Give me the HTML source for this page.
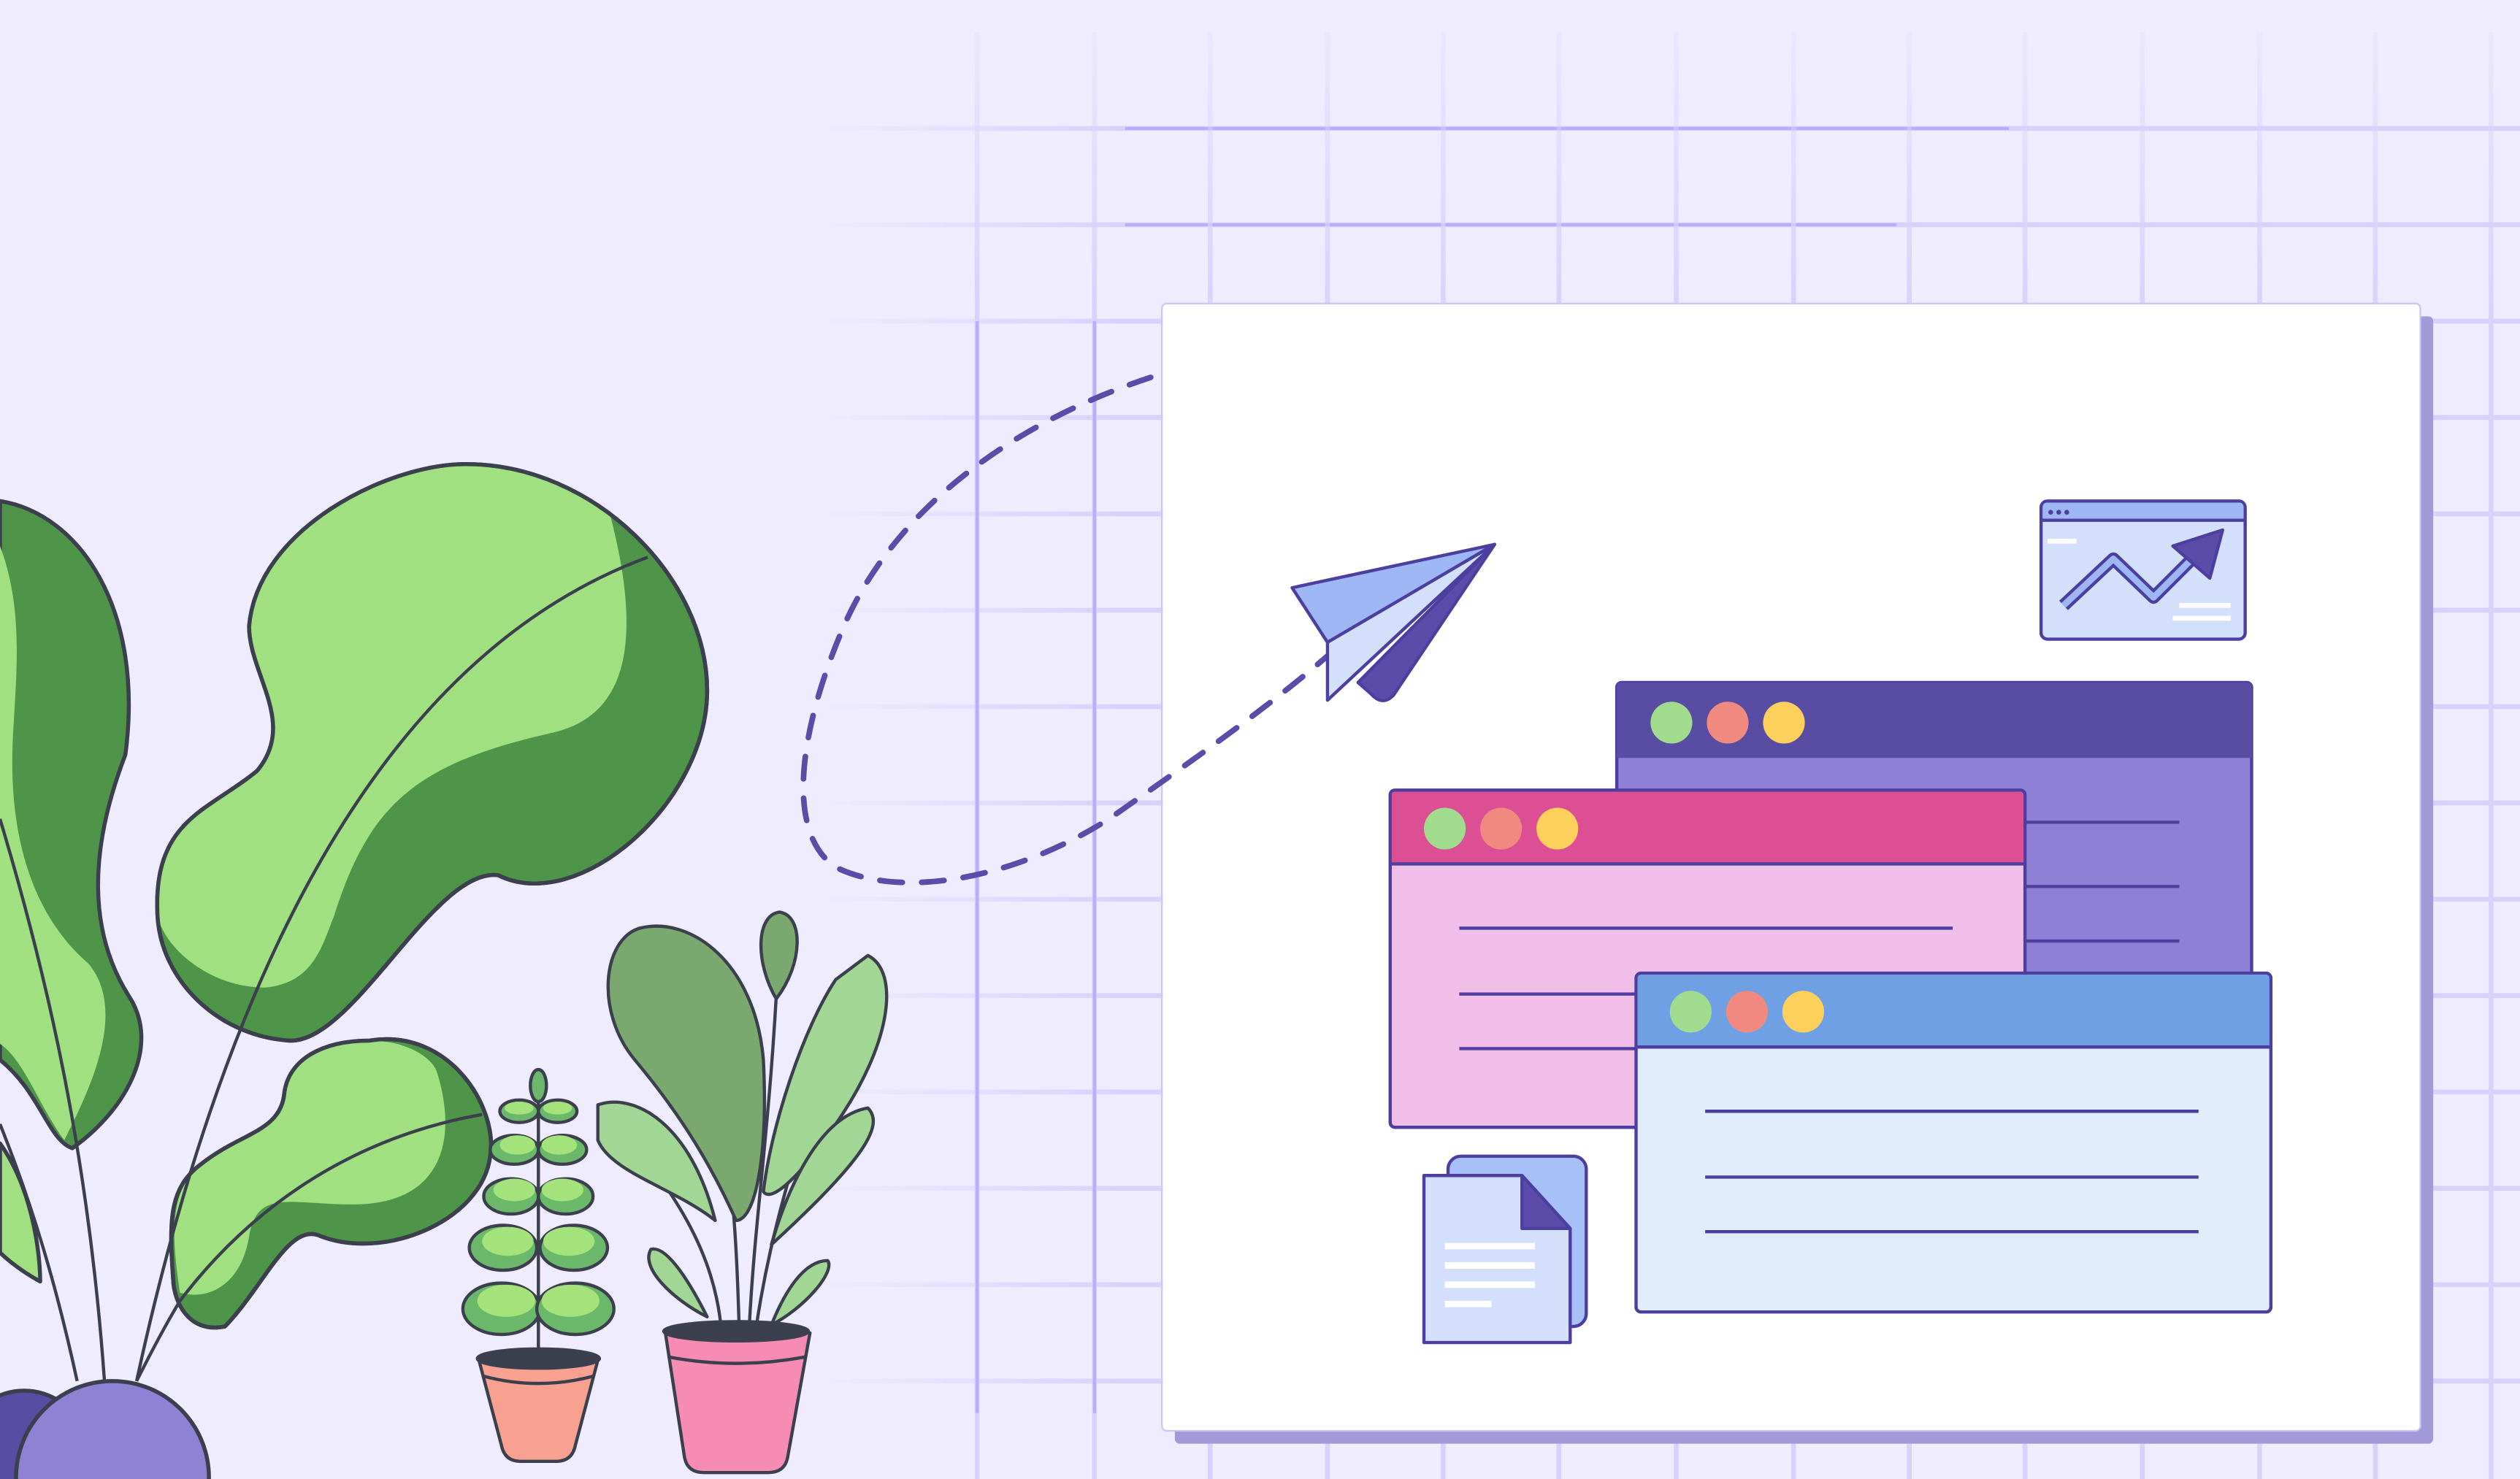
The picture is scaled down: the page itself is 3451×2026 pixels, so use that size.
<!DOCTYPE html>
<html><head><meta charset="utf-8"><style>html,body{margin:0;padding:0;background:#eeecfe;overflow:hidden;width:3451px;height:2026px}svg{display:block}</style></head><body>
<svg width="3451" height="2026" viewBox="0 0 1568 921" preserveAspectRatio="none" xmlns="http://www.w3.org/2000/svg">
<defs>
<linearGradient id="fh" gradientUnits="userSpaceOnUse" x1="510" y1="0" x2="700" y2="0"><stop offset="0" stop-color="#d8d2fb" stop-opacity="0"/><stop offset="1" stop-color="#d8d2fb" stop-opacity="1"/></linearGradient>
<linearGradient id="fv" gradientUnits="userSpaceOnUse" x1="0" y1="20" x2="0" y2="200"><stop offset="0" stop-color="#d8d2fb" stop-opacity="0.2"/><stop offset="1" stop-color="#d8d2fb"/></linearGradient>
</defs>
<rect width="1568" height="921" fill="#eeecfe"/>
<g stroke="url(#fh)" stroke-width="3">
<line x1="510" y1="80" x2="1568" y2="80"/><line x1="510" y1="140" x2="1568" y2="140"/><line x1="510" y1="200" x2="1568" y2="200"/><line x1="510" y1="260" x2="1568" y2="260"/><line x1="510" y1="320" x2="1568" y2="320"/><line x1="510" y1="380" x2="1568" y2="380"/><line x1="510" y1="440" x2="1568" y2="440"/><line x1="510" y1="500" x2="1568" y2="500"/><line x1="510" y1="560" x2="1568" y2="560"/><line x1="510" y1="620" x2="1568" y2="620"/><line x1="510" y1="680" x2="1568" y2="680"/><line x1="510" y1="740" x2="1568" y2="740"/><line x1="510" y1="800" x2="1568" y2="800"/><line x1="510" y1="860" x2="1568" y2="860"/>
</g>
<g stroke="#ab9ff6" stroke-width="2" opacity="0.7"><line x1="700" y1="80" x2="1250" y2="80"/><line x1="700" y1="140" x2="1180" y2="140"/></g>
<g stroke="url(#fv)" stroke-width="3">
<line x1="608" y1="20" x2="608" y2="921"/><line x1="681" y1="20" x2="681" y2="921"/><line x1="753" y1="20" x2="753" y2="921"/><line x1="826" y1="20" x2="826" y2="921"/><line x1="898" y1="20" x2="898" y2="921"/><line x1="970" y1="20" x2="970" y2="921"/><line x1="1043" y1="20" x2="1043" y2="921"/><line x1="1116" y1="20" x2="1116" y2="921"/><line x1="1188" y1="20" x2="1188" y2="921"/><line x1="1260" y1="20" x2="1260" y2="921"/><line x1="1333" y1="20" x2="1333" y2="921"/><line x1="1406" y1="20" x2="1406" y2="921"/><line x1="1478" y1="20" x2="1478" y2="921"/><line x1="1550" y1="20" x2="1550" y2="921"/>
</g>
<g stroke="#a597f5" stroke-width="2" opacity="0.6"><line x1="608" y1="200" x2="608" y2="880"/><line x1="681" y1="200" x2="681" y2="880"/></g>
<rect x="731" y="197" width="783" height="702" rx="3" fill="#a29ad8"/>
<rect x="723" y="189" width="783" height="702" rx="3" fill="#fff" stroke="#cbc4f5"/>
<path d="M716 235 C640 260 560 310 525 390 C495 460 490 520 520 540 C560 560 630 548 690 510 C740 475 790 440 830 405" fill="none" stroke="#5a4ca8" stroke-width="3.5" stroke-dasharray="14 12" stroke-linecap="round"/>
<g stroke="#4c3f9f" stroke-width="2" stroke-linejoin="round">
<path d="M804 366 L930 339 L826 400 Z" fill="#9fb6f5"/>
<path d="M826 400 L930 339 L826 436 Z" fill="#d4e0fb"/>
<path d="M845 425 L930 339 L867 433 Q860 440 853 432 Z" fill="#5a4ca8"/>
</g>
<rect x="1270" y="312" width="127" height="86" rx="4" fill="#d4e0fb" stroke="#4c3f9f" stroke-width="2"/>
<path d="M1271 324 V316 Q1271 313 1274 313 H1393 Q1396 313 1396 316 V324 Z" fill="#9fb6f5"/>
<line x1="1270" y1="324" x2="1397" y2="324" stroke="#4c3f9f" stroke-width="2"/>
<g fill="#4c3f9f"><circle cx="1276" cy="319" r="1.5"/><circle cx="1281" cy="319" r="1.5"/><circle cx="1286" cy="319" r="1.5"/></g>
<path d="M1284 377 L1315 348 L1340 372 L1366 346" fill="none" stroke="#4c3f9f" stroke-width="8" stroke-linejoin="round"/>
<path d="M1284 377 L1315 348 L1340 372 L1366 346" fill="none" stroke="#9fb6f5" stroke-width="4" stroke-linejoin="round"/>
<path d="M1352 340 L1383 330 L1375 360 Z" fill="#5a4ca8" stroke="#4c3f9f" stroke-width="2" stroke-linejoin="round"/>
<g stroke="#fff" stroke-width="3"><line x1="1274" y1="337" x2="1292" y2="337"/><line x1="1356" y1="377" x2="1388" y2="377"/><line x1="1352" y1="385" x2="1388" y2="385"/></g>
<rect x="1006" y="425" width="395" height="200" rx="3" fill="#8d80d6" stroke="#4c3f9f" stroke-width="2"/>
<path d="M1006 472 V428 Q1006 425 1009 425 H1398 Q1401 425 1401 428 V472 Z" fill="#594ca3"/>
<circle cx="1040" cy="450" r="13" fill="#a0db8e"/><circle cx="1075" cy="450" r="13" fill="#f08a80"/><circle cx="1110" cy="450" r="13" fill="#fdd05b"/>
<g stroke="#4c3f9f" stroke-width="2"><line x1="1255" y1="512" x2="1356" y2="512"/><line x1="1255" y1="552" x2="1356" y2="552"/><line x1="1255" y1="586" x2="1356" y2="586"/></g>
<rect x="865" y="492" width="395" height="210" rx="3" fill="#f1bde9" stroke="#4c3f9f" stroke-width="2"/>
<path d="M866 538 V495 Q866 493 868 493 H1257 Q1259 493 1259 495 V538 Z" fill="#dc4f94"/>
<line x1="865" y1="538" x2="1260" y2="538" stroke="#4c3f9f" stroke-width="2"/>
<circle cx="899" cy="516" r="13" fill="#a0db8e"/><circle cx="934" cy="516" r="13" fill="#f08a80"/><circle cx="969" cy="516" r="13" fill="#fdd05b"/>
<g stroke="#4c3f9f" stroke-width="2"><line x1="908" y1="578" x2="1215" y2="578"/><line x1="908" y1="619" x2="1020" y2="619"/><line x1="908" y1="653" x2="1020" y2="653"/></g>
<rect x="1018" y="606" width="395" height="211" rx="3" fill="#e1ecfd" stroke="#4c3f9f" stroke-width="2"/>
<path d="M1019 652 V609 Q1019 607 1021 607 H1410 Q1412 607 1412 609 V652 Z" fill="#6fa0e3"/>
<line x1="1018" y1="652" x2="1413" y2="652" stroke="#4c3f9f" stroke-width="2"/>
<circle cx="1052" cy="630" r="13" fill="#a0db8e"/><circle cx="1087" cy="630" r="13" fill="#f08a80"/><circle cx="1122" cy="630" r="13" fill="#fdd05b"/>
<g stroke="#4c3f9f" stroke-width="2"><line x1="1061" y1="692" x2="1368" y2="692"/><line x1="1061" y1="733" x2="1368" y2="733"/><line x1="1061" y1="767" x2="1368" y2="767"/></g>
<rect x="901" y="720" width="86" height="106" rx="8" fill="#a7c1f8" stroke="#4c3f9f" stroke-width="2"/>
<path d="M886 732 H947 L977 765 V836 H886 Z" fill="#d4e0fb" stroke="#4c3f9f" stroke-width="2" stroke-linejoin="round"/>
<path d="M947 732 V765 H977 Z" fill="#5a4ca8" stroke="#4c3f9f" stroke-width="2" stroke-linejoin="round"/>
<g stroke="#fff" stroke-width="4"><line x1="899" y1="776" x2="955" y2="776"/><line x1="899" y1="788" x2="955" y2="788"/><line x1="899" y1="800" x2="955" y2="800"/><line x1="899" y1="812" x2="928" y2="812"/></g>
<g stroke="#3c3f4d" stroke-width="2.5" stroke-linejoin="round">
<path d="M0 312 C50 320 90 380 78 470 C55 530 55 580 80 620 C100 650 80 690 45 715 C30 710 25 680 0 660 Z" fill="#4e954a"/>
<path d="M0 340 C15 380 10 420 8 460 C5 520 20 570 55 600 C80 630 55 680 40 710 C25 690 15 660 0 650 Z" fill="#a0e081" stroke="none"/>
<path d="M0 712 C20 740 25 780 25 798 C10 790 0 780 0 780 Z" fill="#a0e081"/>
<path d="M290 289 C240 289 160 330 155 390 C155 420 185 450 160 480 C130 505 95 510 98 570 C100 610 135 645 180 648 C220 650 270 540 310 545 C360 570 440 500 440 430 C440 360 370 289 290 289 Z" fill="#4e954a"/>
<path d="M290 289 C240 289 160 330 155 390 C155 420 185 450 160 480 C130 505 95 510 98 570 C102 590 130 615 165 615 C195 612 200 590 208 570 C230 500 260 475 345 456 C390 445 400 400 380 322 C355 300 320 289 290 289 Z" fill="#a0e081" stroke="none"/>
<path d="M290 289 C240 289 160 330 155 390 C155 420 185 450 160 480 C130 505 95 510 98 570 C100 610 135 645 180 648 C220 650 270 540 310 545 C360 570 440 500 440 430 C440 360 370 289 290 289 Z" fill="none"/>
<path d="M230 648 C280 640 310 690 305 720 C300 760 240 785 200 770 C180 760 165 800 140 826 C120 830 110 815 108 800 C105 760 105 740 125 725 C150 705 175 705 177 680 C180 660 200 648 230 648 Z" fill="#4e954a"/>
<path d="M230 648 C255 648 270 660 272 668 C285 710 275 750 220 750 C180 750 160 740 155 770 C150 800 130 810 112 805 C105 760 108 740 125 725 C150 705 175 705 177 680 C180 660 200 648 230 648 Z" fill="#a0e081" stroke="none"/>
<path d="M230 648 C280 640 310 690 305 720 C300 760 240 785 200 770 C180 760 165 800 140 826 C120 830 110 815 108 800 C105 760 105 740 125 725 C150 705 175 705 177 680 C180 660 200 648 230 648 Z" fill="none"/>
<g fill="none" stroke-width="2"><path d="M403 347 C260 400 150 560 85 860"/><path d="M300 694 C210 710 150 760 112 810 C100 830 90 850 85 860"/><path d="M0 510 C30 610 55 720 65 860"/><path d="M0 700 C20 750 35 800 48 860"/></g>
</g>
<circle cx="15" cy="906" r="40" fill="#594ca3" stroke="#3c3f4d" stroke-width="2.5"/>
<circle cx="70" cy="920" r="60" fill="#8f82d5" stroke="#3c3f4d" stroke-width="2.5"/>
<g stroke="#3c3f4d" stroke-width="2">
<line x1="335" y1="670" x2="335" y2="845"/>
<g fill="#6cb86a">
<ellipse cx="335" cy="676" rx="5" ry="10"/>
<ellipse cx="323" cy="692" rx="12" ry="7"/><ellipse cx="347" cy="692" rx="12" ry="7"/>
<ellipse cx="320" cy="716" rx="15" ry="9"/><ellipse cx="350" cy="716" rx="15" ry="9"/>
<ellipse cx="318" cy="745" rx="17" ry="11"/><ellipse cx="352" cy="745" rx="17" ry="11"/>
<ellipse cx="313" cy="777" rx="21" ry="14"/><ellipse cx="357" cy="777" rx="21" ry="14"/>
<ellipse cx="312" cy="815" rx="24" ry="16"/><ellipse cx="358" cy="815" rx="24" ry="16"/>
</g>
<g fill="#a4e37b" stroke="none">
<ellipse cx="323" cy="690" rx="9" ry="4"/><ellipse cx="347" cy="690" rx="9" ry="4"/>
<ellipse cx="322" cy="713" rx="11" ry="6"/><ellipse cx="348" cy="713" rx="11" ry="6"/>
<ellipse cx="320" cy="741" rx="13" ry="7"/><ellipse cx="350" cy="741" rx="13" ry="7"/>
<ellipse cx="316" cy="773" rx="16" ry="9"/><ellipse cx="354" cy="773" rx="16" ry="9"/>
<ellipse cx="315" cy="810" rx="18" ry="10"/><ellipse cx="355" cy="810" rx="18" ry="10"/>
</g>
<path d="M298 847 L372 847 L358 900 Q356 910 346 910 L324 910 Q314 910 312 900 Z" fill="#f8a191"/>
<ellipse cx="335" cy="846" rx="38" ry="6" fill="#3c3f4d"/>
<path d="M301 857 Q335 866 369 857" fill="none"/>
</g>
<g stroke="#3c3f4d" stroke-width="2" stroke-linejoin="round">
<g fill="none"><path d="M460 830 C458 760 455 700 430 600"/><path d="M466 830 C470 750 480 700 485 580"/><path d="M470 830 C480 760 500 700 535 600"/><path d="M449 830 C445 780 420 740 375 690"/></g>
<path d="M398 578 C430 570 470 600 475 660 C478 720 470 760 458 760 C440 720 420 690 395 660 C370 630 375 585 398 578 Z" fill="#7ba86e"/>
<path d="M485 568 C500 570 500 600 483 622 C470 600 470 570 485 568 Z" fill="#7ba86e"/>
<path d="M540 595 C560 605 555 650 520 700 C500 730 480 750 475 742 C480 700 500 640 520 610 Z" fill="#a1d694"/>
<path d="M372 688 C395 680 430 700 445 760 C420 740 380 730 372 710 Z" fill="#a1d694"/>
<path d="M540 690 C550 700 540 720 480 775 C490 740 510 695 540 690 Z" fill="#a1d694"/>
<path d="M405 778 C415 775 430 800 440 820 C420 810 398 790 405 778 Z" fill="#a1d694"/>
<path d="M515 785 C520 792 500 815 480 825 C488 805 500 785 515 785 Z" fill="#a1d694"/>
<path d="M414 830 L504 830 L490 908 Q488 917 478 917 L438 917 Q428 917 426 908 Z" fill="#f68bb3"/>
<ellipse cx="458" cy="829" rx="45" ry="6" fill="#3c3f4d"/>
<path d="M416 845 Q458 853 501 845" fill="none"/>
</g>
</svg>
</body></html>
